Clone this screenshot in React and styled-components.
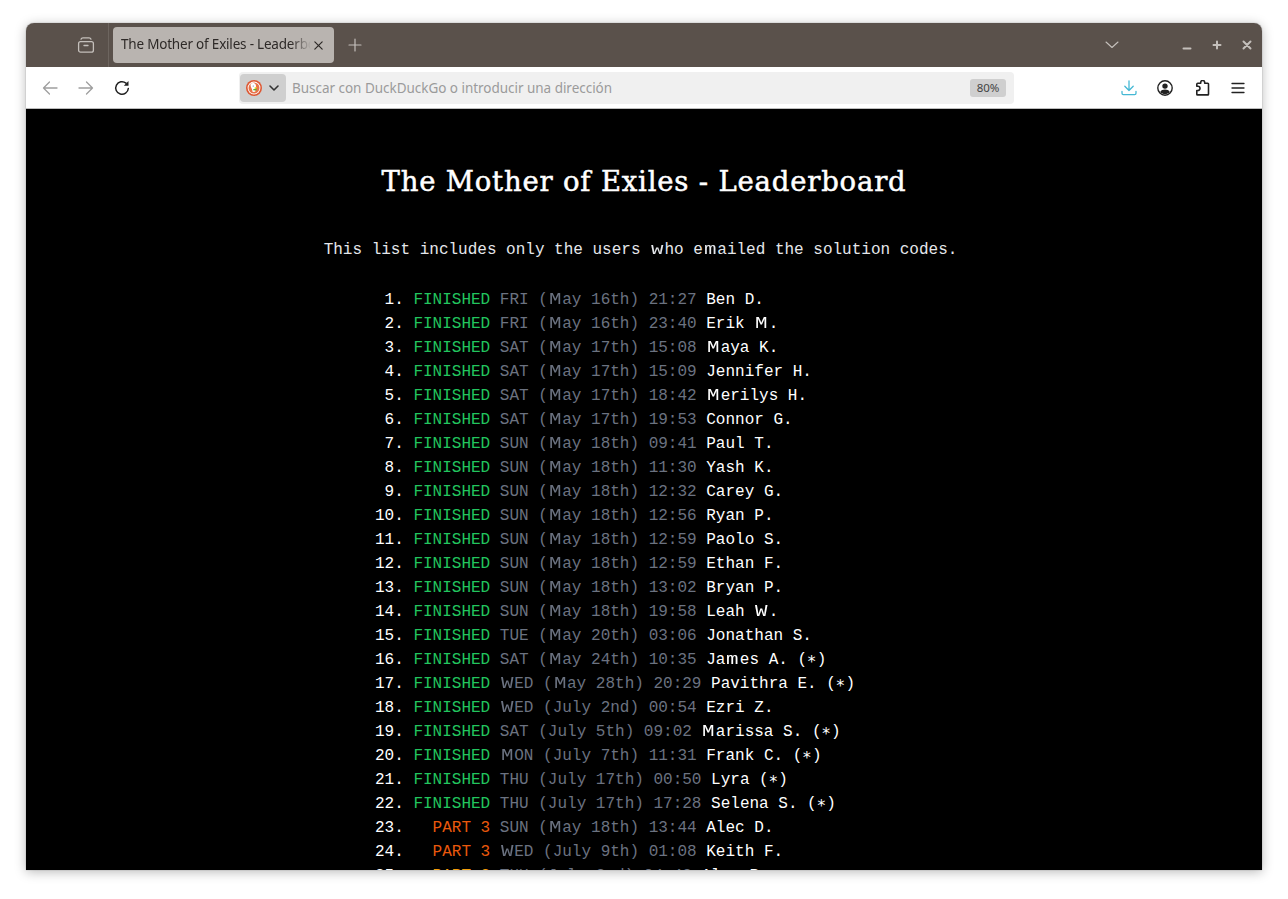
import React from 'react';
import styled, { createGlobalStyle } from 'styled-components';

const Global = createGlobalStyle`
  html, body { margin: 0; padding: 0; background: #fff; height: 100%; overflow: hidden; }
  #root { height: 899px; }
`;

const Page = styled.div`
  box-sizing: border-box;
  height: 899px;
  padding: 23px 26px 29px;
`;
const Window = styled.div`
  display: flex;
  flex-direction: column;
  height: 847px;
  overflow: hidden;
  border-radius: 8px 8px 0 0;
  box-shadow: 0 0 1px rgba(0,0,0,.55), 0 2px 12px rgba(0,0,0,.28);
`;
const TitleBar = styled.div`
  flex: none;
  display: flex;
  align-items: center;
  height: 44px;
  background: #5a514b;
  color: #c4bfbb;
`;
const PinnedArea = styled.div`
  box-sizing: border-box;
  flex: none;
  display: flex;
  align-items: center;
  justify-content: flex-end;
  width: 83px;
  height: 44px;
  padding-right: 13px;
  border-right: 1px solid #6d655f;
`;
const Tab = styled.div`
  box-sizing: border-box;
  flex: none;
  display: flex;
  align-items: center;
  justify-content: space-between;
  width: 221px;
  height: 36px;
  margin-left: 4px;
  padding: 0 10px 0 8px;
  border-radius: 4px;
  background: #b9b4b0;
  color: #2e2a28;
`;
const TabLabel = styled.span`
  width: 190px;
  padding-bottom: 2px;
  overflow: hidden;
  white-space: nowrap;
  font: 13.5px/18px "Noto Sans", sans-serif;
  letter-spacing: -0.2px;
  -webkit-mask-image: linear-gradient(to right, #000 170px, transparent 190px);
  mask-image: linear-gradient(to right, #000 170px, transparent 190px);
`;
const NewTab = styled.div`
  display: flex;
  margin-left: 14px;
`;
const Spacer = styled.div`
  flex: 1;
`;
const WinControls = styled.div`
  display: flex;
  align-items: center;
  gap: 18px;
  margin-left: 62px;
  margin-right: 9px;
`;
const Toolbar = styled.div`
  box-sizing: border-box;
  flex: none;
  display: flex;
  align-items: center;
  height: 42px;
  padding: 0 16px;
  background: #fff;
  border-bottom: 1px solid #bdbdbd;
`;
const NavGroup = styled.div`
  display: flex;
  align-items: center;
  gap: 20px;
`;
const UrlBar = styled.div`
  box-sizing: border-box;
  flex: none;
  display: flex;
  align-items: center;
  width: 775px;
  height: 32px;
  margin-left: 109px;
  padding: 0 8px 0 1px;
  border-radius: 4px;
  background: #f0f0f0;
`;
const Identity = styled.div`
  flex: none;
  display: flex;
  align-items: center;
  justify-content: space-between;
  box-sizing: border-box;
  width: 46px;
  height: 28px;
  padding: 0 6px;
  border-radius: 4px;
  background: #cfcfcf;
`;
const Placeholder = styled.span`
  flex: 1;
  margin-left: 6px;
  color: #9b9b9b;
  font: 13.5px/18px "Noto Sans", sans-serif;
  letter-spacing: -0.03px;
  white-space: nowrap;
`;
const Zoom = styled.span`
  flex: none;
  width: 36px;
  height: 18px;
  border-radius: 3px;
  background: #cfcfcf;
  color: #444;
  font: 11.5px/18px "Noto Sans", sans-serif;
  text-align: center;
`;
const ActionGroup = styled.div`
  display: flex;
  align-items: center;
  gap: 20.4px;
  margin-left: 107px;
`;
const Content = styled.main`
  flex: 1;
  overflow: hidden;
  background: #000;
  padding-top: 52px;
  color: #fff;
  font-family: "Liberation Mono", monospace;
`;
const Heading = styled.h1`
  margin: 0;
  font: 400 27.5px/40px "DejaVu Serif", serif;
  letter-spacing: 0.8px;
  text-align: center;
  color: #fff;
  -webkit-text-stroke: 0.5px #fff;
`;
const Intro = styled.p`
  margin: 37px 0 26px;
  padding-right: 7px;
  font-size: 16px;
  line-height: 24px;
  text-align: center;
  color: #e5e7eb;
  white-space: pre;
`;
const List = styled.div`
  width: 538px;
  margin: 0 auto;
`;
const Row = styled.div`
  font-size: 16px;
  line-height: 24px;
  white-space: pre;
`;
const Status = styled.span`
  color: ${p => p.$color};
`;
const Stamp = styled.span`
  color: #6b7280;
`;
const Wide = styled.span`
  display: inline-block;
  width: 14.4px;
  text-align: center;
  transform: scaleX(1.3);
`;

const duo = s =>
  s.split(/([MWmw])/).map((part, i) =>
    /^[MWmw]$/.test(part) ? <Wide key={i}>{part}</Wide> : part
  );

const Svg = ({ size = 16, box = 16, children, color = 'currentColor', w = 1.3 }) => (
  <svg width={size} height={size} viewBox={`0 0 ${box} ${box}`} fill="none" stroke={color} strokeWidth={w} strokeLinecap="round" strokeLinejoin="round">
    {children}
  </svg>
);

const TabsIcon = () => (
  <Svg size={18} box={18} color="#c4bfbb" w={1.3}>
    <rect x="1.6" y="5.6" width="14.8" height="10.6" rx="2" />
    <path d="M4 3.2c.3-1 1-1.4 2-1.4h6c1 0 1.700.4 2 1.400" />
    <path d="M7 9.500h4" />
  </Svg>
);
const CloseIcon = () => (
  <Svg size={11} box={12} color="#2e2a28" w={1.3}>
    <path d="M2 2l8 8M10 2l-8 8" />
  </Svg>
);
const PlusIcon = () => (
  <Svg size={14} box={14} color="#c4bfbb" w={1.2}>
    <path d="M7 1v12M1 7h12" />
  </Svg>
);
const ChevronBig = () => (
  <Svg size={14} box={14} color="#c4bfbb" w={1.1}>
    <path d="M1 4l6 5.500L13 4" />
  </Svg>
);
const MinIcon = () => (
  <Svg size={12} box={12} color="#c4bfbb" w={2}>
    <path d="M2.500 9.500h7" />
  </Svg>
);
const MaxIcon = () => (
  <Svg size={12} box={12} color="#c4bfbb" w={2}>
    <path d="M6 2.500v7M2.500 6h7" />
  </Svg>
);
const XIcon = () => (
  <Svg size={12} box={12} color="#c4bfbb" w={2}>
    <path d="M2.500 2.500l7 7M9.500 2.500l-7 7" />
  </Svg>
);
const BackIcon = () => (
  <Svg size={16} box={16} color="#9e9e9e" w={1.300}>
    <path d="M15 8H1.500M7.500 2L1.500 8l6 6" />
  </Svg>
);
const ForwardIcon = () => (
  <Svg size={16} box={16} color="#9e9e9e" w={1.300}>
    <path d="M1 8h13.500M8.500 2l6 6-6 6" />
  </Svg>
);
const ReloadIcon = () => (
  <Svg size={16} box={16} color="#222" w={1.500}>
    <path d="M14.300 8.500A6.300 6.300 0 1 1 12 3.100" />
    <path d="M14.500 1v4.800H9.800z" fill="#222" stroke="none" />
  </Svg>
);
const DuckLogo = () => (
  <svg width="16" height="16" viewBox="0 0 16 16">
    <circle cx="8" cy="8" r="8" fill="#de5833" />
    <circle cx="8" cy="8" r="6.400" fill="#fff" />
    <circle cx="8" cy="8" r="5.500" fill="#e8734a" />
    <path d="M4.800 3.800c1.700-1.200 4.300-.8 5 1 .5 1.400 0 2.700-.3 4l-.2 3-2.600.2c-.3-1.900-.9-3.300-1.500-4.600-.6-1.200-.9-2.800-.4-3.600z" fill="#fff" />
    <path d="M7.200 9.300l3.300-1v2.300l-3.300-.4z" fill="#5bb52f" />
    <circle cx="7.200" cy="5.900" r=".5" fill="#2d4f8e" />
    <path d="M8.500 7.600l2.300-.5-.2 1.100-2.100.2z" fill="#fdd209" />
  </svg>
);
const SmallChevron = () => (
  <Svg size={12} box={12} color="#333" w={1.600}>
    <path d="M2 4l4 4 4-4" />
  </Svg>
);
const DownloadIcon = () => (
  <Svg size={16} box={16} color="#45b8d4" w={1.300}>
    <path d="M8 1v9.500M3.800 6.300L8 10.500l4.200-4.200" />
    <path d="M1 11.500v1.800c0 .8.500 1.300 1.300 1.300h11.400c.8 0 1.300-.5 1.300-1.300v-1.800" />
  </Svg>
);
const AccountIcon = () => (
  <svg width="16" height="16" viewBox="0 0 16 16">
    <circle cx="8" cy="8" r="7.200" fill="none" stroke="#222" strokeWidth="1.400" />
    <circle cx="8" cy="6.100" r="2.700" fill="#222" />
    <path d="M3.200 12c1-1.700 2.700-2.400 4.800-2.400s3.800.7 4.800 2.400c-1.200 1.400-2.900 2.200-4.800 2.200s-3.600-.8-4.800-2.200z" fill="#222" />
  </svg>
);
const PuzzleIcon = () => (
  <Svg size={16} box={16} color="#222" w={1.600}>
    <path d="M6.700 3.200V2.500a2 2 0 0 1 4 0v.7h3.100c.4 0 .7.300.7.700v10.300c0 .4-.3.700-.7.700H3.500a.7.7 0 0 1-.7-.7v-3.700h1.100a2.100 2.100 0 0 0 0-4.200H2.800V4.200c0-.6.400-1 1-1z" />
  </Svg>
);
const MenuIcon = () => (
  <Svg size={16} box={16} color="#222" w={1.300}>
    <path d="M2 3.500h12M2 8h12M2 12.500h12" />
  </Svg>
);

const GREEN = '#22c55e';
const ORANGE = '#ea580c';
const AMBER = '#f59e0b';

const rows = [
  ['FINISHED', GREEN, 'FRI (May 16th) 21:27', 'Ben D.'],
  ['FINISHED', GREEN, 'FRI (May 16th) 23:40', 'Erik M.'],
  ['FINISHED', GREEN, 'SAT (May 17th) 15:08', 'Maya K.'],
  ['FINISHED', GREEN, 'SAT (May 17th) 15:09', 'Jennifer H.'],
  ['FINISHED', GREEN, 'SAT (May 17th) 18:42', 'Merilys H.'],
  ['FINISHED', GREEN, 'SAT (May 17th) 19:53', 'Connor G.'],
  ['FINISHED', GREEN, 'SUN (May 18th) 09:41', 'Paul T.'],
  ['FINISHED', GREEN, 'SUN (May 18th) 11:30', 'Yash K.'],
  ['FINISHED', GREEN, 'SUN (May 18th) 12:32', 'Carey G.'],
  ['FINISHED', GREEN, 'SUN (May 18th) 12:56', 'Ryan P.'],
  ['FINISHED', GREEN, 'SUN (May 18th) 12:59', 'Paolo S.'],
  ['FINISHED', GREEN, 'SUN (May 18th) 12:59', 'Ethan F.'],
  ['FINISHED', GREEN, 'SUN (May 18th) 13:02', 'Bryan P.'],
  ['FINISHED', GREEN, 'SUN (May 18th) 19:58', 'Leah W.'],
  ['FINISHED', GREEN, 'TUE (May 20th) 03:06', 'Jonathan S.'],
  ['FINISHED', GREEN, 'SAT (May 24th) 10:35', 'James A. (∗)'],
  ['FINISHED', GREEN, 'WED (May 28th) 20:29', 'Pavithra E. (∗)'],
  ['FINISHED', GREEN, 'WED (July 2nd) 00:54', 'Ezri Z.'],
  ['FINISHED', GREEN, 'SAT (July 5th) 09:02', 'Marissa S. (∗)'],
  ['FINISHED', GREEN, 'MON (July 7th) 11:31', 'Frank C. (∗)'],
  ['FINISHED', GREEN, 'THU (July 17th) 00:50', 'Lyra (∗)'],
  ['FINISHED', GREEN, 'THU (July 17th) 17:28', 'Selena S. (∗)'],
  ['PART 3', ORANGE, 'SUN (May 18th) 13:44', 'Alec D.'],
  ['PART 3', ORANGE, 'WED (July 9th) 01:08', 'Keith F.'],
  ['PART 2', AMBER, 'THU (July 3rd) 04:42', 'Alex R.'],
];

export default function App() {
  return (
    <Page>
      <Global />
      <Window>
        <TitleBar>
          <PinnedArea><TabsIcon /></PinnedArea>
          <Tab>
            <TabLabel>The Mother of Exiles - Leaderboard</TabLabel>
            <CloseIcon />
          </Tab>
          <NewTab><PlusIcon /></NewTab>
          <Spacer />
          <ChevronBig />
          <WinControls>
            <MinIcon />
            <MaxIcon />
            <XIcon />
          </WinControls>
        </TitleBar>
        <Toolbar>
          <NavGroup>
            <BackIcon />
            <ForwardIcon />
            <ReloadIcon />
          </NavGroup>
          <UrlBar>
            <Identity><DuckLogo /><SmallChevron /></Identity>
            <Placeholder>Buscar con DuckDuckGo o introducir una dirección</Placeholder>
            <Zoom>80%</Zoom>
          </UrlBar>
          <ActionGroup>
            <DownloadIcon />
            <AccountIcon />
            <PuzzleIcon />
            <MenuIcon />
          </ActionGroup>
        </Toolbar>
        <Content>
          <Heading>The Mother of Exiles - Leaderboard</Heading>
          <Intro>{duo('This list includes only the users who emailed the solution codes.')}</Intro>
          <List>
            {rows.map(([status, color, stamp, name], i) => (
              <Row key={i}>
                {`${String(i + 1).padStart(2)}. `}
                <Status $color={color}>{status.padStart(8)}</Status>
                {' '}
                <Stamp>{duo(stamp)}</Stamp>
                {' '}
                {duo(name)}
              </Row>
            ))}
          </List>
        </Content>
      </Window>
    </Page>
  );
}
